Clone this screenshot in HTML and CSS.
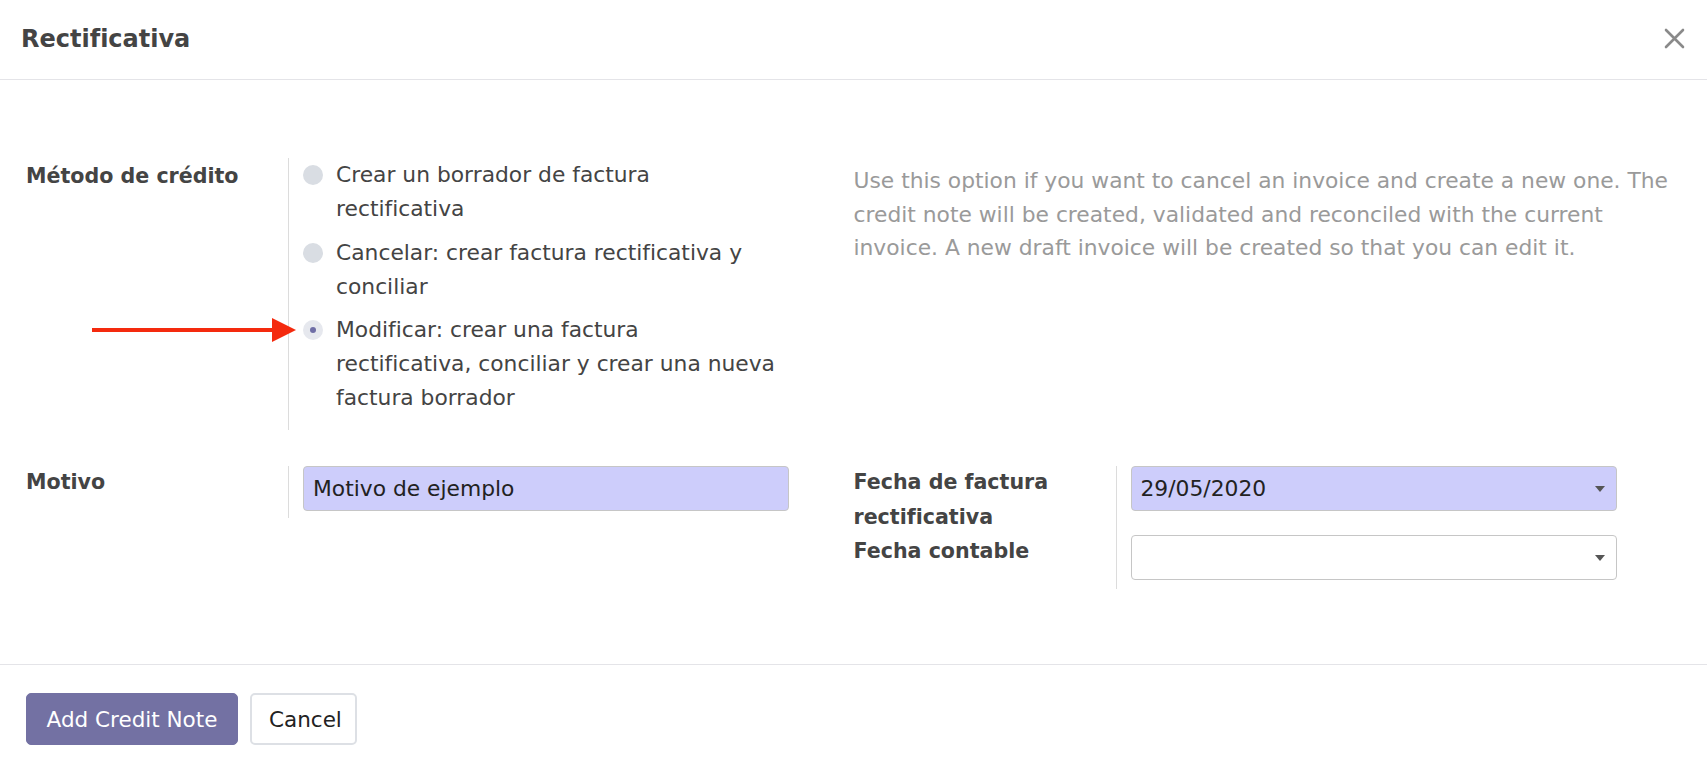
FILE: index.html
```html
<!DOCTYPE html>
<html lang="es">
<head>
<meta charset="utf-8">
<title>Rectificativa</title>
<link rel="stylesheet" href="styles.css">
</head>
<body>
<div class="dialog">
  <header class="dlg-header">
    <h4 class="dlg-title">Rectificativa</h4>
    <button class="dlg-close" type="button" aria-label="Cerrar">
      <svg width="21" height="21" viewBox="0 0 21 21"><path d="M2 2 L19 19 M19 2 L2 19" stroke="#8a8a8a" stroke-width="2.6" stroke-linecap="round"/></svg>
    </button>
  </header>

  <main class="dlg-body">
    <div class="row row-top">
      <div class="group">
        <div class="lbl">Método de crédito</div>
        <div class="field field-radios">
          <ul class="radios">
            <li><span class="radio"></span><span class="rtext">Crear un borrador de factura rectificativa</span></li>
            <li><span class="radio"></span><span class="rtext">Cancelar: crear factura rectificativa y conciliar</span></li>
            <li class="checked">
              <svg class="arrow" width="204" height="26" viewBox="0 0 204 26"><rect x="0" y="11" width="182" height="4" fill="#f42a0e"/><polygon points="180,1 204,13 180,25" fill="#f42a0e"/></svg>
              <span class="radio"></span><span class="rtext">Modificar: crear una factura rectificativa, conciliar y crear una nueva factura borrador</span>
            </li>
          </ul>
        </div>
      </div>
      <div class="help">Use this option if you want to cancel an invoice and create a new one. The credit note will be created, validated and reconciled with the current invoice. A new draft invoice will be created so that you can edit it.</div>
    </div>

    <div class="row row-bottom">
      <div class="group">
        <div class="lbl">Motivo</div>
        <div class="field field-pad">
          <div class="input filled">Motivo de ejemplo</div>
        </div>
      </div>
      <div class="group">
        <div class="lbl">Fecha de factura rectificativa</div>
        <div class="field">
          <div class="input filled select">29/05/2020<span class="caret"></span></div>
        </div>
        <div class="lbl">Fecha contable</div>
        <div class="field field-pad2">
          <div class="input select"><span class="caret"></span></div>
        </div>
      </div>
    </div>
  </main>

  <footer class="dlg-footer">
    <button class="btn btn-primary" type="button">Add Credit Note</button>
    <button class="btn btn-secondary" type="button">Cancel</button>
  </footer>
</div>
</body>
</html>
```

FILE: styles.css
```css
* { box-sizing: border-box; }

html, body {
  margin: 0;
  padding: 0;
  background: #ffffff;
}

body {
  font-family: "DejaVu Sans", Verdana, sans-serif;
  font-size: 21.8px;
  color: #444444;
}

.dialog {
  width: 1707px;
  height: 781px;
  display: flex;
  flex-direction: column;
  background: #fff;
}

/* header */
.dlg-header {
  height: 80px;
  flex: none;
  display: flex;
  align-items: center;
  justify-content: space-between;
  padding: 0 22px 2px 21px;
  border-bottom: 1px solid #e4e4e8;
}

.dlg-title {
  margin: 0;
  font-size: 24px;
  font-weight: bold;
  color: #444;
}

.dlg-close {
  border: 0;
  background: none;
  padding: 0;
  width: 21px;
  height: 21px;
  display: flex;
  cursor: pointer;
}

/* body */
.dlg-body {
  flex: 1;
  padding: 79px 26px 0 26px;
}

.row {
  display: grid;
  grid-template-columns: 1fr 1fr;
}

.row-bottom {
  margin-top: 36px;
}

.group {
  display: grid;
  grid-template-columns: 262px 501px;
  align-content: start;
}

.lbl {
  font-weight: bold;
  font-size: 20.6px;
  line-height: 34px;
  color: #444;
  padding-right: 20px;
}

.row-bottom .lbl {
  line-height: 35px;
  margin-top: -1px;
}

.field {
  border-left: 1px solid #dcdcdc;
  padding-left: 14px;
}

.row-top .field {
  margin-top: -1px;
}

.field-radios {
  padding-bottom: 15px;
}

.field-pad {
  padding-bottom: 7.5px;
}

.field-pad2 {
  padding-bottom: 9px;
}

/* radios */
.radios {
  list-style: none;
  margin: 0;
  padding: 0;
  max-width: 475px;
}

.radios li {
  position: relative;
  display: flex;
  align-items: flex-start;
  line-height: 34px;
}

.radios li + li {
  margin-top: 9.5px;
}

.radio {
  flex: none;
  width: 20px;
  height: 20px;
  margin-top: 7px;
  margin-right: 13px;
  border-radius: 50%;
  background: #d9dde3;
  position: relative;
}

.checked .radio {
  background: #e6e8ee;
}

.checked .radio::after {
  content: "";
  position: absolute;
  left: 7px;
  top: 7px;
  width: 6px;
  height: 6px;
  border-radius: 50%;
  background: #6f6ea6;
}

.rtext {
  color: #444;
}

.arrow {
  position: absolute;
  left: -211px;
  top: 4px;
}

/* help */
.help {
  padding-top: 5px;
  line-height: 33.7px;
  color: #9a9a9a;
}

/* inputs */
.input {
  position: relative;
  width: 100%;
  height: 44.5px;
  border: 1px solid #c6c6c6;
  border-radius: 4px;
  padding: 0 9px;
  display: flex;
  align-items: center;
  color: #222;
  background: #fff;
}

.input.filled {
  background: #cdcdfb;
}

.caret {
  position: absolute;
  right: 11px;
  top: 50%;
  margin-top: -2px;
  width: 0;
  height: 0;
  border-left: 5px solid transparent;
  border-right: 5px solid transparent;
  border-top: 6px solid #555;
}

/* footer */
.dlg-footer {
  flex: none;
  height: 117px;
  border-top: 1px solid #e4e4e8;
  padding: 28px 26px 0 26px;
  display: flex;
  align-items: flex-start;
  gap: 12px;
}

.btn {
  height: 52px;
  border-radius: 5px;
  font-family: "DejaVu Sans", Verdana, sans-serif;
  font-size: 21.5px;
  padding: 0 17px;
  cursor: pointer;
}

.btn-primary {
  width: 212px;
  background: #7371a3;
  border: 1px solid #7371a3;
  color: #fff;
}

.btn-secondary {
  width: 107px;
  background: #fff;
  border: 2px solid #dde0e5;
  color: #222;
}
```
